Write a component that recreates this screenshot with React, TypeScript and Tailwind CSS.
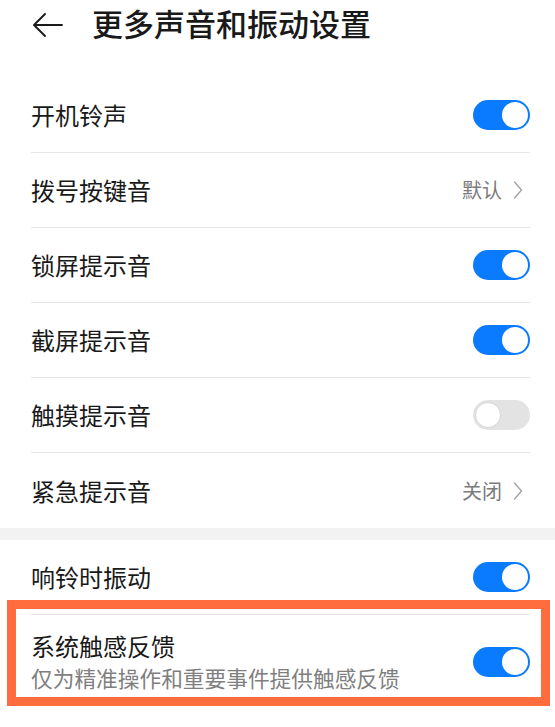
import React from 'react'

type Row = {
  label: string
  kind: 'toggle' | 'link'
  on?: boolean
  value?: string
}

const soundRows: Row[] = [
  { label: '开机铃声', kind: 'toggle', on: true },
  { label: '拨号按键音', kind: 'link', value: '默认' },
  { label: '锁屏提示音', kind: 'toggle', on: true },
  { label: '截屏提示音', kind: 'toggle', on: true },
  { label: '触摸提示音', kind: 'toggle', on: false },
  { label: '紧急提示音', kind: 'link', value: '关闭' },
]

function Toggle({ on }: { on: boolean }) {
  return (
    <div
      className={`flex h-[30px] w-[57px] shrink-0 items-center rounded-full p-[2px] ${
        on ? 'justify-end bg-[#0a7aff]' : 'justify-start bg-[#e3e3e3]'
      }`}
    >
      <div
        className={`h-[26px] w-[26px] rounded-full bg-white ${on ? '' : 'border border-[#d6d6d6]'}`}
      />
    </div>
  )
}

function Chevron() {
  return (
    <svg width="10" height="20" viewBox="0 0 10 20" fill="none" className="ml-[11px] mr-[7px]">
      <path d="M1.5 2 L8.5 10 L1.5 18" stroke="#a3a3a3" strokeWidth="1.4" strokeLinecap="round" strokeLinejoin="round" />
    </svg>
  )
}

function SettingRow({ row, last }: { row: Row; last?: boolean }) {
  return (
    <div className={`flex h-[75px] items-center justify-between ${last ? '' : 'border-b border-[#e6e6e6]'}`}>
      <span className="text-[24px] text-[#191919]">{row.label}</span>
      {row.kind === 'toggle' ? (
        <Toggle on={!!row.on} />
      ) : (
        <div className="flex items-center">
          <span className="text-[20px] text-[#7a7a7a]">{row.value}</span>
          <Chevron />
        </div>
      )}
    </div>
  )
}

export default function App() {
  return (
    <div
      className="relative h-[727px] w-[555px] overflow-hidden bg-white"
      style={{ fontFamily: '"Noto Sans CJK SC", "Noto Sans", sans-serif' }}
    >
      {/* 标题栏 */}
      <div className="flex h-[78px] items-start pt-[3px]">
        <svg width="32" height="26" viewBox="0 0 32 26" fill="none" className="ml-[32px] mt-[9px]">
          <path d="M2 13 H30 M13 2 L2 13 L13 24" stroke="#1a1a1a" strokeWidth="1.9" strokeLinecap="round" strokeLinejoin="round" />
        </svg>
        <h1 className="ml-[28px] text-[31px] font-medium leading-[40px] text-[#191919]">更多声音和振动设置</h1>
      </div>

      {/* 声音 */}
      <div className="pl-[31px] pr-[25px]">
        {soundRows.map((row, idx) => (
          <SettingRow key={row.label} row={row} last={idx === soundRows.length - 1} />
        ))}
      </div>

      <div className="h-[12px] bg-[#f2f2f2]" />

      {/* 振动 */}
      <div className="pl-[31px] pr-[25px]">
        <SettingRow row={{ label: '响铃时振动', kind: 'toggle', on: true }} />
        <div className="flex items-center justify-between pt-[16px] pb-[20px]">
          <div className="flex flex-col">
            <span className="text-[24px] leading-[30px] text-[#191919]">系统触感反馈</span>
            <span className="mt-[2px] text-[21.7px] leading-[30px] text-[#7f7f7f]">仅为精准操作和重要事件提供触感反馈</span>
          </div>
          <Toggle on />
        </div>
      </div>

      {/* 高亮框 */}
      <div className="pointer-events-none absolute left-[7px] top-[600px] h-[106px] w-[543px] border-[9px] border-[#ff6d3f]" />
    </div>
  )
}
